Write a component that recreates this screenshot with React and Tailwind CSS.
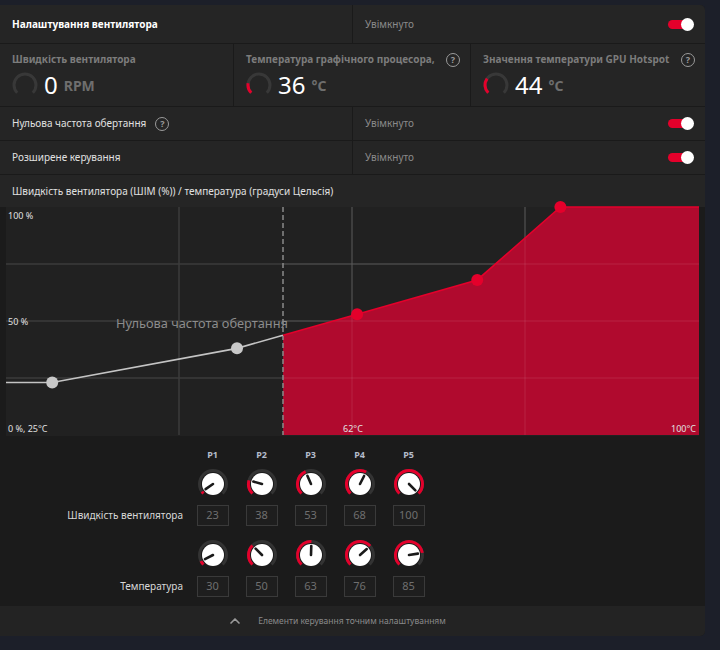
import { ChevronUp } from 'lucide-react'

const speeds = [23, 38, 53, 68, 100]
const temps = [30, 50, 63, 76, 85]

const font = { fontFamily: '"Noto Sans", "Open Sans", sans-serif' }

function polar(c, r, deg) {
  const rad = (deg * Math.PI) / 180
  return [c + r * Math.sin(rad), c - r * Math.cos(rad)]
}

function arc(c, r, from, to) {
  const [x1, y1] = polar(c, r, from)
  const [x2, y2] = polar(c, r, to)
  const large = to - from > 180 ? 1 : 0
  return `M ${x1} ${y1} A ${r} ${r} 0 ${large} 1 ${x2} ${y2}`
}

function Help() {
  return (
    <span className="inline-flex h-[14px] w-[14px] shrink-0 items-center justify-center rounded-full border-[1.5px] border-[#9a9a9a] text-[9px] font-bold leading-none text-[#9a9a9a]">
      ?
    </span>
  )
}

function Toggle() {
  return (
    <div className="flex items-center">
      <div className="h-[9px] w-[20px] rounded-full bg-[#e4002b]" />
      <div className="-ml-[7px] h-[13px] w-[13px] rounded-full bg-white" />
    </div>
  )
}

function Gauge({ frac }) {
  const end = -135 + 270 * frac
  return (
    <svg width="26" height="26" viewBox="0 0 26 26">
      <path d={arc(13, 11, -135, 135)} fill="none" stroke="#383838" strokeWidth="3" />
      {frac > 0.01 && (
        <path d={arc(13, 11, -135, end)} fill="none" stroke="#e4002b" strokeWidth="3" />
      )}
    </svg>
  )
}

function Knob({ frac }) {
  const end = -135 + 270 * frac
  const [px, py] = polar(16, 9, end)
  return (
    <svg width="32" height="32" viewBox="0 0 32 32">
      <path d={arc(16, 13.5, -135, 135)} fill="none" stroke="#333" strokeWidth="3" />
      {frac > 0.01 && (
        <path d={arc(16, 13.5, -135, end)} fill="none" stroke="#e4002b" strokeWidth="3" />
      )}
      <circle cx="16" cy="16" r="11" fill="#fff" />
      <line x1="16" y1="16" x2={px} y2={py} stroke="#1a1a1a" strokeWidth="2.6" strokeLinecap="round" />
    </svg>
  )
}

function StatCell({ label, value, unit, frac, help }) {
  return (
    <div className="flex flex-col bg-[#252525] pl-3 pr-[10px] pt-[8px]">
      <div className="flex items-center justify-between">
        <span className="whitespace-nowrap text-[10px] font-bold text-[#7c7c7c]">{label}</span>
        {help && <Help />}
      </div>
      <div className="mt-[5px] flex items-center gap-[6px]">
        <Gauge frac={frac} />
        <span className="text-[24px] leading-none text-white">{value}</span>
        <span className="mt-[2px] text-[14px] font-bold leading-none text-[#6e6e6e]">{unit}</span>
      </div>
    </div>
  )
}

function ToggleRow({ label, help }) {
  return (
    <div className="flex h-[33px] gap-px">
      <div className="flex w-[352px] items-center gap-[9px] bg-[#252525] pl-3">
        <span className="text-[10px] text-[#e0e0e0]">{label}</span>
        {help && <Help />}
      </div>
      <div className="flex flex-1 items-center justify-between bg-[#252525] pl-3 pr-[11px]">
        <span className="text-[10px] text-[#8a8a8a]">Увімкнуто</span>
        <Toggle />
      </div>
    </div>
  )
}

const W = 693
const H = 228
const pt = (t, s) => [(W * (t - 25)) / 75, H * (1 - s / 100)]

function Chart() {
  const pts = temps.map((t, i) => pt(t, speeds[i]))
  const thX = 277
  const [ax, ay] = pts[1]
  const [bx, by] = pts[2]
  const thY = ay + ((thX - ax) / (bx - ax)) * (by - ay)
  const grayLine = [[0, pts[0][1]], pts[0], pts[1], [thX, thY]]
  const redLine = [[thX, thY], pts[2], pts[3], pts[4], [W, 0]]
  const fill = [...redLine, [W, H], [thX, H]]
  const toStr = (arr) => arr.map((p) => p.join(',')).join(' ')
  const hLines = [57, 114, 171]
  const vLines = [173, 346, 519]

  return (
    <div className="relative h-[229px] w-[693px] bg-[#212121]">
      <svg width={W} height={H + 1} className="absolute left-0 top-0 overflow-visible">
        {hLines.map((y) => (
          <line key={'h' + y} x1="0" x2={W} y1={y} y2={y} stroke="#3b3b3b" strokeWidth="1.5" />
        ))}
        {vLines.map((x) => (
          <line key={'v' + x} x1={x} x2={x} y1="0" y2={H} stroke="#3b3b3b" strokeWidth="1.5" />
        ))}
        <text x="196" y="121" textAnchor="middle" fill="#8c8c8c" fontSize="12.8" style={font}>
          Нульова частота обертання
        </text>
        <polygon points={toStr(fill)} fill="#b00a2e" />
        {hLines.map((y) => (
          <line key={'hr' + y} x1={thX} x2={W} y1={y} y2={y} stroke="rgba(255,255,255,0.07)" strokeWidth="1.5" />
        ))}
        {vLines.filter((x) => x > thX).map((x) => (
          <line key={'vr' + x} x1={x} x2={x} y1="0" y2={H} stroke="rgba(255,255,255,0.07)" strokeWidth="1.5" />
        ))}
        <line x1={thX} x2={thX} y1="0" y2={H} stroke="#8a8a8a" strokeWidth="1.5" strokeDasharray="5 3" />
        <polyline points={toStr(grayLine)} fill="none" stroke="#c4c4c4" strokeWidth="1.6" />
        <polyline points={toStr(redLine)} fill="none" stroke="#e4002b" strokeWidth="1.6" />
        {pts.map(([x, y], i) => (
          <circle key={i} cx={x} cy={y} r="6" fill={i < 2 ? '#c8c8c8' : '#e4002b'} />
        ))}
      </svg>
      <span className="absolute left-[2px] top-[2px] text-[9px] text-[#e0e0e0]">100 %</span>
      <span className="absolute left-[2px] top-[108px] text-[9px] text-[#e0e0e0]">50 %</span>
      <span className="absolute bottom-[1px] left-[2px] text-[9px] text-[#e0e0e0]">0 %, 25°C</span>
      <span className="absolute bottom-[1px] left-[337px] text-[9px] text-[#e0e0e0]">62°C</span>
      <span className="absolute bottom-[1px] right-[3px] text-[9px] text-[#e0e0e0]">100°C</span>
    </div>
  )
}

function ValueBox({ value }) {
  return (
    <div className="flex h-[21px] w-[32px] items-center justify-center border border-[#3a3a3a] bg-[#1e1e1e] text-[11px] text-[#6f6f6f]">
      {value}
    </div>
  )
}

function Knobs() {
  return (
    <div className="flex flex-col bg-[#1b1b1b] pb-[9px] pt-[12px]">
      <div className="flex h-[14px] items-center pl-[188px]">
        {speeds.map((_, i) => (
          <div key={i} className="w-[49px] text-center text-[9px] font-bold text-[#b4bccb]">
            P{i + 1}
          </div>
        ))}
      </div>
      <div className="mt-[6px] flex pl-[188px]">
        {speeds.map((s) => (
          <div key={s} className="flex w-[49px] justify-center">
            <Knob frac={(s - 20) / 80} />
          </div>
        ))}
      </div>
      <div className="mt-[5px] flex items-center">
        <div className="w-[188px] pr-[5px] text-right text-[10px] text-[#d8d8d8]">Швидкість вентилятора</div>
        {speeds.map((s) => (
          <div key={s} className="flex w-[49px] justify-center">
            <ValueBox value={s} />
          </div>
        ))}
      </div>
      <div className="mt-[13px] flex pl-[188px]">
        {temps.map((t) => (
          <div key={t} className="flex w-[49px] justify-center">
            <Knob frac={(t - 25) / 75} />
          </div>
        ))}
      </div>
      <div className="mt-[5px] flex items-center">
        <div className="w-[188px] pr-[5px] text-right text-[10px] text-[#d8d8d8]">Температура</div>
        {temps.map((t) => (
          <div key={t} className="flex w-[49px] justify-center">
            <ValueBox value={t} />
          </div>
        ))}
      </div>
    </div>
  )
}

export default function App() {
  return (
    <div className="min-h-[650px] w-[720px] bg-[#1c1f29] pt-[5px]" style={font}>
      <div className="flex w-[705px] flex-col gap-px overflow-hidden rounded-r-[5px] bg-[#1a1a1a]">
        <div className="flex h-[38px] gap-px">
          <div className="flex w-[352px] items-center bg-[#252525] pl-3">
            <span className="text-[10px] font-bold text-white">Налаштування вентилятора</span>
          </div>
          <div className="flex flex-1 items-center justify-between bg-[#252525] pl-3 pr-[11px]">
            <span className="text-[10px] text-[#8a8a8a]">Увімкнуто</span>
            <Toggle />
          </div>
        </div>

        <div className="grid h-[62px] grid-cols-[233px_236px_1fr] gap-px">
          <StatCell label="Швидкість вентилятора" value="0" unit="RPM" frac={0} />
          <StatCell label="Температура графічного процесора," value="36" unit="°C" frac={0.2} help />
          <StatCell label="Значення температури GPU Hotspot" value="44" unit="°C" frac={0.3} help />
        </div>

        <ToggleRow label="Нульова частота обертання" help />
        <ToggleRow label="Розширене керування" />

        <div className="flex h-[32px] items-center bg-[#252525] pl-3">
          <span className="text-[10px] text-[#e0e0e0]">
            Швидкість вентилятора (ШІМ (%)) / температура (градуси Цельсія)
          </span>
        </div>

        <div className="-mt-px flex flex-col">
          <div className="flex bg-[#1b1b1b] px-[6px]">
            <Chart />
          </div>
          <Knobs />
          <div className="flex h-[30px] items-center justify-center gap-[15px] bg-[#232323] pr-[32px]">
            <ChevronUp size={16} strokeWidth={2.5} className="text-[#9a9a9a]" />
            <span className="text-[8.5px] text-[#8a8a8a]">Елементи керування точним налаштуванням</span>
          </div>
        </div>
      </div>
    </div>
  )
}
